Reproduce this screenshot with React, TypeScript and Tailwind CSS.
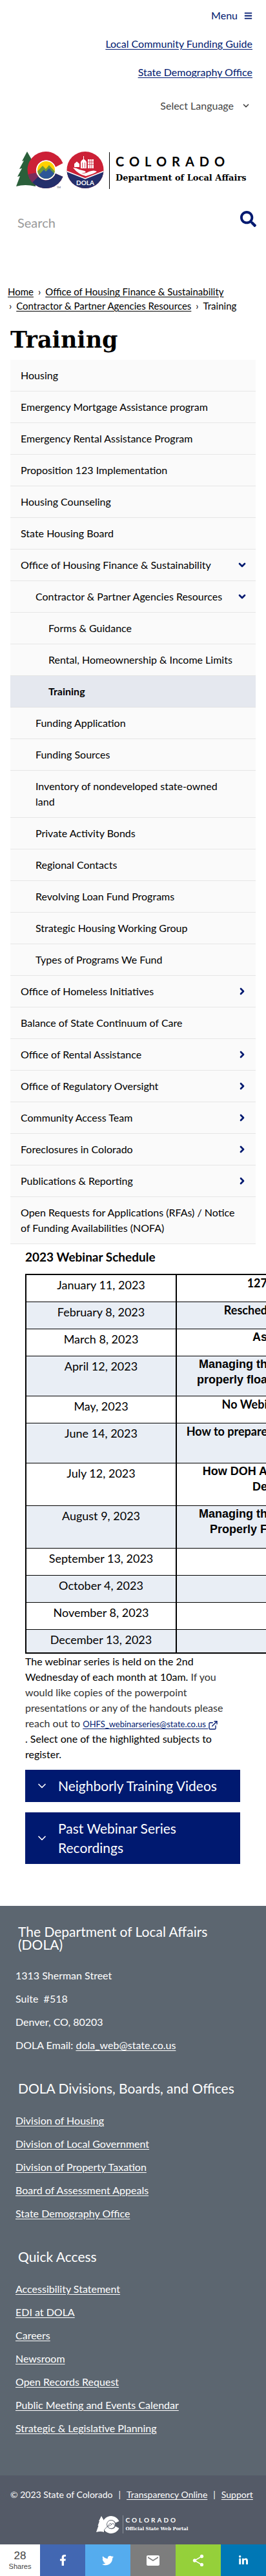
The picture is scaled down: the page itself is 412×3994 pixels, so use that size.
import { FaBars, FaFacebookF, FaLinkedinIn, FaSearch, FaTwitter } from "react-icons/fa";
import { FiExternalLink } from "react-icons/fi";
import { LuChevronDown, LuChevronRight } from "react-icons/lu";
import { MdEmail, MdShare } from "react-icons/md";

type NavItem = { label: string; level: 0 | 1 | 2; state?: "open" | "closed"; current?: boolean };

const navItems: NavItem[] = [
  { label: "Housing", level: 0 },
  { label: "Emergency Mortgage Assistance program", level: 0 },
  { label: "Emergency Rental Assistance Program", level: 0 },
  { label: "Proposition 123 Implementation", level: 0 },
  { label: "Housing Counseling", level: 0 },
  { label: "State Housing Board", level: 0 },
  { label: "Office of Housing Finance & Sustainability", level: 0, state: "open" },
  { label: "Contractor & Partner Agencies Resources", level: 1, state: "open" },
  { label: "Forms & Guidance", level: 2 },
  { label: "Rental, Homeownership & Income Limits", level: 2 },
  { label: "Training", level: 2, current: true },
  { label: "Funding Application", level: 1 },
  { label: "Funding Sources", level: 1 },
  { label: "Inventory of nondeveloped state-owned land", level: 1 },
  { label: "Private Activity Bonds", level: 1 },
  { label: "Regional Contacts", level: 1 },
  { label: "Revolving Loan Fund Programs", level: 1 },
  { label: "Strategic Housing Working Group", level: 1 },
  { label: "Types of Programs We Fund", level: 1 },
  { label: "Office of Homeless Initiatives", level: 0, state: "closed" },
  { label: "Balance of State Continuum of Care", level: 0 },
  { label: "Office of Rental Assistance", level: 0, state: "closed" },
  { label: "Office of Regulatory Oversight", level: 0, state: "closed" },
  { label: "Community Access Team", level: 0, state: "closed" },
  { label: "Foreclosures in Colorado", level: 0, state: "closed" },
  { label: "Publications & Reporting", level: 0, state: "closed" },
  { label: "Open Requests for Applications (RFAs) / Notice of Funding Availabilities (NOFA)", level: 0 },
];

const indent = ["pl-4", "pl-[39px]", "pl-[59px]"];

type Row = { date: string; lines: string[]; height: string; sans?: boolean };

const schedule: Row[] = [
  { date: "January 11, 2023", lines: ["127"], height: "h-[42px]" },
  { date: "February 8, 2023", lines: ["Resched"], height: "h-[42px]" },
  { date: "March 8, 2023", lines: ["As"], height: "h-[42px]", sans: true },
  { date: "April 12, 2023", lines: ["Managing th", "properly floa"], height: "h-[62px]", sans: true },
  { date: "May, 2023", lines: ["No Webi"], height: "h-[42px]" },
  { date: "June 14, 2023", lines: ["How to prepare"], height: "h-[62px]" },
  { date: "July 12, 2023", lines: ["How DOH A", "De"], height: "h-[66px]", sans: true },
  { date: "August 9, 2023", lines: ["Managing th", "Properly F"], height: "h-[66px]", sans: true },
  { date: "September 13, 2023", lines: [], height: "h-[42px]" },
  { date: "October 4, 2023", lines: [], height: "h-[42px]" },
  { date: "November 8, 2023", lines: [], height: "h-[42px]" },
  { date: "December 13, 2023", lines: [], height: "h-[37px]" },
];

const divisions = [
  "Division of Housing",
  "Division of Local Government",
  "Division of Property Taxation",
  "Board of Assessment Appeals",
  "State Demography Office",
];

const quickLinks = [
  "Accessibility Statement",
  "EDI at DOLA",
  "Careers",
  "Newsroom",
  "Open Records Request",
  "Public Meeting and Events Calendar",
  "Strategic & Legislative Planning",
];

function StateEmblem() {
  return (
    <svg viewBox="0 0 136 58" className="h-[58px] w-[136px] shrink-0" aria-hidden="true">
      <defs>
        <clipPath id="letter-c">
          <path d="M72.500 18 A28.500 28.500 0 1 0 72.500 39 L61 34 A15.500 15.500 0 1 1 61 24 Z" />
        </clipPath>
        <clipPath id="sun"><circle cx="46.500" cy="28.500" r="13.500" /></clipPath>
        <clipPath id="seal"><circle cx="107" cy="28.500" r="28.500" /></clipPath>
      </defs>
      <path d="M17 0 L9 15 L12 14 L5 27 L9 26 L2 39 L6 38 L0 54 Q14 50 30 54 L30 14 L25 14 Z" fill="#2a5f3a" />
      <circle cx="46.500" cy="28.500" r="16" fill="#fff" />
      <g clipPath="url(#letter-c)">
        <rect x="16" width="60" height="58" fill="#cc2036" />
        <path d="M16 58 V50 L36 33 L76 33 V58 Z" fill="#242f6b" />
        <path d="M14 36 L30 33 L35 38 L23 50 Z" fill="#7b2c5c" />
      </g>
      <circle cx="46.500" cy="28.500" r="15" fill="#fff" />
      <g clipPath="url(#sun)">
        <rect x="32" y="14" width="30" height="30" fill="#ffd100" />
        <path d="M30 34 L41 22 L46 27 L51 21 L64 35 V44 H30 Z" fill="#6f9a38" />
        <path d="M30 42 L43 28 L46 31 L51 26 L64 39 V46 H30 Z" fill="#2c5697" />
      </g>
      <text x="63" y="57" fontSize="4" fill="#333" fontFamily="Lato">TM</text>
      <g clipPath="url(#seal)">
        <rect x="78" width="58" height="58" fill="#cc2036" />
        <path d="M78 30 L107 42 L136 30 V58 H78 Z" fill="#242f6b" />
        <path d="M77 30 L107 42 L137 30" fill="none" stroke="#fff" strokeWidth="1.500" />
      </g>
      <path d="M88 25 Q93 25 98 28 L106 30 Q110 32 105 33 L101 33 Q107 35 113 31 Q121 28 125 31 Q122 34 108 38 Q97 36 88 25 Z" fill="#fff" />
      <path d="M90 24 V19 L94 15.500 L98 19 V24 Z M100 16 Q104.500 8 109 16 V26 H100 Z M104 7 H105 V12 H104 Z M111 12 H120 V26 H111 Z" fill="#fff" />
      <path d="M102.500 17 V25 M106.500 17 V25 M114 12 V26 M117 12 V26 M111 16 H120 M111 20 H120" stroke="#cc2036" strokeWidth="0.800" fill="none" />
      <text x="107" y="52" textAnchor="middle" fontSize="10" fontWeight="700" fill="#fff" fontFamily="Lato">DOLA</text>
    </svg>
  );
}

function PortalEmblem() {
  return (
    <svg viewBox="0 0 36 28" className="h-7 w-9 shrink-0" aria-hidden="true">
      <path d="M8 1 L4 9 L5 9 L2.500 16 L3.500 16 L0 26 Q7 24 12 26 L12 8 Z" fill="#fff" />
      <path d="M35.500 9 A13.500 13.500 0 1 0 35.500 20 L30 17 A7 7 0 1 1 30 11.500 Z" fill="#fff" />
      <circle cx="23" cy="14" r="6.500" fill="#fff" stroke="#545a67" strokeWidth="0.800" />
      <path d="M12 23 L19 15 L22 12 L24 14 L26 12 L29 16 M17 18 L24 14" fill="none" stroke="#545a67" strokeWidth="0.800" />
    </svg>
  );
}

function FooterLinks({ items }: { items: string[] }) {
  return (
    <ul className="space-y-3 px-6">
      {items.map((item) => (
        <li key={item}>
          <a href="#" className="underline underline-offset-2">{item}</a>
        </li>
      ))}
    </ul>
  );
}

function AccordionButton({ children }: { children: string }) {
  return (
    <button type="button" className="flex w-full items-center gap-[15px] bg-[#001970] py-[10px] pr-8 pl-4 text-left text-[21px] leading-[30px] text-white">
      <LuChevronDown className="size-5 shrink-0" />
      <span>{children}</span>
    </button>
  );
}

export default function App() {
  return (
    <div className="overflow-x-hidden bg-white font-[Lato,sans-serif] text-base text-black">
      <header>
        <div className="flex flex-col items-end gap-5 pt-3 pr-[21px] text-[#001970]">
          <button type="button" className="flex items-center gap-[10px]">
            Menu
            <FaBars className="size-[13px]" />
          </button>
          <a href="#" className="underline underline-offset-2">Local Community Funding Guide</a>
          <a href="#" className="underline underline-offset-2">State Demography Office</a>
          <button type="button" className="mt-2 flex items-center gap-3 pr-[3px] text-[#444]">
            Select Language
            <LuChevronDown className="size-[14px]" strokeWidth={3} />
          </button>
        </div>
        <div className="mt-[59px] flex items-center pl-[25px]">
          <StateEmblem />
          <div className="ml-2 flex h-[57px] flex-col justify-center border-l border-black pl-[9px]">
            <span className="text-xl leading-6 font-bold tracking-[8px]">COLORADO</span>
            <span className="font-['DejaVu_Serif',serif] text-[13px] leading-7 font-bold whitespace-nowrap">Department of Local Affairs</span>
          </div>
        </div>
        <form className="mt-7 flex items-start pr-[15px] pl-[27px]" onSubmit={(e) => e.preventDefault()}>
          <input type="text" aria-label="Search" placeholder="Search" className="mt-1 h-10 min-w-0 flex-1 text-xl outline-none placeholder:text-[#999]" />
          <button type="submit" aria-label="Submit search" className="pt-[6px] text-[#001970]">
            <FaSearch className="size-[25px]" />
          </button>
        </form>
      </header>

      <main>
        <nav aria-label="Breadcrumb" className="mt-[76px] px-3 text-[15px] leading-[22px]">
          <a href="#" className="underline underline-offset-2">Home</a>
          <span className="mx-[7px]">›</span>
          <a href="#" className="underline underline-offset-2">Office of Housing Finance &amp; Sustainability</a>
          <br />
          <span className="mr-[7px] ml-[2px]">›</span>
          <a href="#" className="underline underline-offset-2">Contractor &amp; Partner Agencies Resources</a>
          <span className="mx-[7px]">›</span>
          <span>Training</span>
        </nav>
        <h1 className="mt-[18px] px-4 font-['DejaVu_Serif',serif] text-[35px] leading-[48px] font-bold">Training</h1>

        <nav aria-label="Section" className="mx-4 mt-[7px]">
          <ul>
            {navItems.map((item) => (
              <li key={item.label} className={item.current ? "border-b border-[#e2e2e4] bg-[#e5e8ef] font-bold" : "border-b border-[#e6e6e6] bg-[#fafafa]"}>
                <div className="flex items-center justify-between">
                  <a href="#" className={`${indent[item.level]} ${item.state ? "pr-1" : "pr-7"} block flex-1 py-3`}>{item.label}</a>
                  {item.state && (
                    <button type="button" aria-label={`Toggle ${item.label}`} className="mr-[13px] text-[#001970]">
                      {item.state === "open" ? <LuChevronDown className="size-4" strokeWidth={4} /> : <LuChevronRight className="size-4" strokeWidth={4} />}
                    </button>
                  )}
                </div>
              </li>
            ))}
          </ul>
        </nav>

        <section className="pl-[39px]">
          <h2 className="pt-2 text-[19px] leading-6 font-bold">2023 Webinar Schedule</h2>
          <div className="mt-[14px] -mr-1 overflow-hidden">
            <table className="w-full table-fixed border-collapse border-2 border-black text-lg leading-6">
              <tbody>
                {schedule.map((row) => (
                  <tr key={row.date} className={`${row.height} even:bg-[#e9eef5]`}>
                    <td className="w-[233px] border border-r-2 border-black pt-[3px] text-center align-top">{row.date}</td>
                    <td className={`${row.sans ? "font-['Liberation_Sans',sans-serif]" : ""} border border-black text-right align-top font-bold whitespace-nowrap`}>
                      {row.lines.map((line) => (
                        <div key={line}>{line}</div>
                      ))}
                    </td>
                  </tr>
                ))}
              </tbody>
            </table>
          </div>
          <p className="pr-10">
            The webinar series is held on the 2nd Wednesday of each month at 10am. <span className="text-[#333]">If you would like copies of the powerpoint presentations or any of the handouts please reach out to </span>
            <a href="#" className="text-[13px] text-[#001970] underline underline-offset-2">
              OHFS_webinarseries@state.co.us <FiExternalLink className="inline size-4" />
            </a>
            <br />. Select one of the highlighted subjects to register.
          </p>
          <div className="mt-3 space-y-4 pr-10">
            <AccordionButton>Neighborly Training Videos</AccordionButton>
            <AccordionButton>Past Webinar Series Recordings</AccordionButton>
          </div>
        </section>
      </main>

      <footer className="mt-[65px] bg-[#5c6670] text-white">
        <h2 className="pt-[30px] pr-10 pl-7 text-[21px] leading-5">The Department of Local Affairs (DOLA)</h2>
        <div className="mt-[26px] space-y-3 px-6">
          <p>1313 Sherman Street</p>
          <p>Suite &nbsp;#518</p>
          <p>Denver, CO, 80203</p>
          <p>DOLA Email: <a href="#" className="underline underline-offset-2">dola_web@state.co.us</a></p>
        </div>
        <h2 className="mt-[45px] mb-[28px] px-7 text-[21px] leading-5">DOLA Divisions, Boards, and Offices</h2>
        <FooterLinks items={divisions} />
        <h2 className="mt-[45px] mb-[28px] px-7 text-[21px] leading-5">Quick Access</h2>
        <FooterLinks items={quickLinks} />
        <div className="mt-[61px] bg-[#545a67] pt-5 pb-[17px]">
          <p className="flex gap-[9px] px-4 text-sm leading-5 whitespace-nowrap">
            <span>© 2023 State of Colorado</span>
            <span>|</span>
            <a href="#" className="underline underline-offset-2">Transparency Online</a>
            <span>|</span>
            <a href="#" className="underline underline-offset-2">Support</a>
          </p>
          <div className="mt-[22px] flex items-center justify-center pl-7">
            <PortalEmblem />
            <div className="ml-[5px] flex flex-col border-l border-[#8a8f99] pl-1">
              <span className="text-[10px] leading-[14px] font-bold tracking-[3px]">COLORADO</span>
              <span className="font-['DejaVu_Serif',serif] text-[7px] leading-[14px] font-bold">Official State Web Portal</span>
            </div>
          </div>
        </div>
      </footer>

      <div className="flex h-[49px] text-xl text-white">
        <div className="flex w-[62px] flex-col items-center justify-center bg-white font-['Liberation_Sans',sans-serif] text-[#444]">
          <span className="text-[17px] leading-[18px]">28</span>
          <span className="text-[11px] leading-[14px]">Shares</span>
        </div>
        <button type="button" aria-label="Share on Facebook" className="flex flex-1 items-center justify-center bg-[#4267b2]"><FaFacebookF className="size-[17px]" /></button>
        <button type="button" aria-label="Share on Twitter" className="flex flex-1 items-center justify-center bg-[#55acee]"><FaTwitter className="size-[18px]" /></button>
        <button type="button" aria-label="Share by email" className="flex flex-1 items-center justify-center bg-[#7d7d7d]"><MdEmail className="size-6" /></button>
        <button type="button" aria-label="Share" className="flex flex-1 items-center justify-center bg-[#95d03a]"><MdShare className="size-[22px]" /></button>
        <button type="button" aria-label="Share on LinkedIn" className="flex flex-1 items-center justify-center bg-[#0077b5]"><FaLinkedinIn className="size-4" /></button>
      </div>
    </div>
  );
}
